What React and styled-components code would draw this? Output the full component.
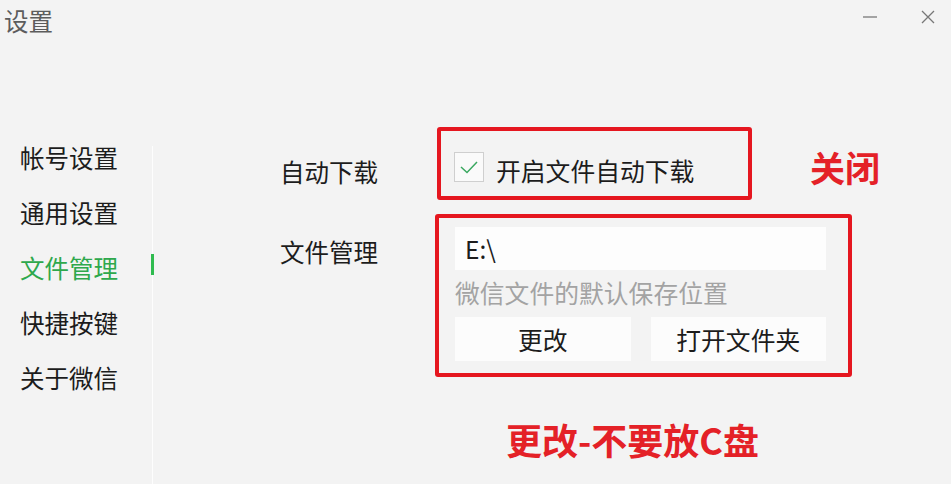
import styled, { createGlobalStyle } from "styled-components";

const GlobalStyle = createGlobalStyle`
    html, body {
        margin: 0;
        padding: 0;
        background: #f3f3f3;
    }
    body {
        font-family: "Noto Sans CJK SC", "Noto Sans", sans-serif;
        color: #1c1c1c;
    }
`

const Window = styled.div`
    width: 951px;
    height: 484px;
    display: flex;
    flex-direction: column;
    background: #f3f3f3;
    overflow: hidden;
`

const TitleBar = styled.div`
    height: 44px;
    display: flex;
    align-items: flex-start;
    justify-content: space-between;
`

const Title = styled.div`
    padding: 7px 0 0 4px;
    font-size: 24.5px;
    line-height: 28px;
    color: #5c5c5c;
`

const Controls = styled.div`
    display: flex;
    gap: 40px;
    padding: 8px 14px 0 0;
`

const ControlButton = styled.div`
    width: 18px;
    height: 18px;
    display: flex;
    align-items: center;
    justify-content: center;
    color: #777;
`

const Main = styled.div`
    flex: 1;
    display: flex;
`

const Sidebar = styled.nav`
    width: 152px;
    margin-top: 102px;
    border-right: 1px solid #fdfdfd;
    display: flex;
    flex-direction: column;
    gap: 31px;
`

const NavItem = styled.div`
    position: relative;
    padding-left: 20px;
    font-size: 24.5px;
    line-height: 24px;
    color: ${props => props.active ? "#2ea84c" : "#1c1c1c"};

    &::after {
        content: "";
        display: ${props => props.active ? "block" : "none"};
        position: absolute;
        right: -2px;
        top: -2px;
        width: 3px;
        height: 21px;
        background: #2fbb4f;
    }
`

const Content = styled.div`
    flex: 1;
    padding: 83px 0 0 127px;
    display: flex;
    flex-direction: column;
`

const Row = styled.div`
    display: flex;
    align-items: flex-start;
    margin-top: ${props => props.gap || 0}px;
`

const Label = styled.div`
    width: ${props => props.width}px;
    margin-top: ${props => props.offset}px;
    font-size: 24.5px;
    line-height: 24px;
`

const RedBox = styled.div`
    box-sizing: border-box;
    width: ${props => props.width}px;
    height: ${props => props.height}px;
    border: 4px solid #e5161f;
    border-radius: 3px;
`

const CheckRow = styled.label`
    display: flex;
    align-items: center;
    gap: 12px;
    padding: 21px 0 0 13px;
    font-size: 24.8px;
    line-height: 24px;
`

const CheckBox = styled.span`
    box-sizing: border-box;
    width: 30px;
    height: 30px;
    border: 1px solid #cfcfcf;
    background: #fafafa;
    display: flex;
    align-items: center;
    justify-content: center;
`

const CheckText = styled.span`
    margin-top: 6px;
`

const Note = styled.div`
    margin: 22px 0 0 58px;
    font-size: 35px;
    line-height: 36px;
    font-weight: 700;
    color: #e42127;
`

const PathPanel = styled.div`
    padding: 9px 22px 0 16px;
    display: flex;
    flex-direction: column;
`

const PathInput = styled.div`
    height: 43px;
    background: #fdfdfd;
    padding-left: 10px;
    display: flex;
    align-items: center;
    font-size: 24.5px;
`

const Hint = styled.div`
    margin-top: 9px;
    font-size: 24.8px;
    line-height: 26px;
    color: #a3a3a3;
`

const ButtonRow = styled.div`
    display: grid;
    grid-template-columns: 1fr 1fr;
    gap: 20px;
    margin-top: 12px;
`

const Button = styled.div`
    height: 44px;
    background: #fcfcfc;
    display: flex;
    align-items: center;
    justify-content: center;
    font-size: 24.8px;
`

const Caption = styled.div`
    margin: 44px 0 0 226px;
    font-size: 36px;
    line-height: 36px;
    font-weight: 700;
    color: #e42127;
    white-space: nowrap;
`

const navItems = ["帐号设置", "通用设置", "文件管理", "快捷按键", "关于微信"];

export default function App() {
    return (
        <Window>
            <GlobalStyle />
            <TitleBar>
                <Title>设置</Title>
                <Controls>
                    <ControlButton>
                        <svg width="16" height="16" viewBox="0 0 16 16">
                            <line x1="1" y1="8" x2="15" y2="8" stroke="#777" strokeWidth="1.3" />
                        </svg>
                    </ControlButton>
                    <ControlButton>
                        <svg width="16" height="16" viewBox="0 0 16 16">
                            <path d="M2 2 L14 14 M14 2 L2 14" stroke="#777" strokeWidth="1.3" />
                        </svg>
                    </ControlButton>
                </Controls>
            </TitleBar>
            <Main>
                <Sidebar>
                    {navItems.map((item) => (
                        <NavItem key={item} active={item === "文件管理"}>{item}</NavItem>
                    ))}
                </Sidebar>
                <Content>
                    <Row>
                        <Label width={157} offset={33}>自动下载</Label>
                        <RedBox width={315} height={73}>
                            <CheckRow>
                                <CheckBox>
                                    <svg width="22" height="16" viewBox="0 0 22 16">
                                        <path d="M3 8 L9 13.5 L19 3" fill="none" stroke="#3aa860" strokeWidth="1.5" />
                                    </svg>
                                </CheckBox>
                                <CheckText>开启文件自动下载</CheckText>
                            </CheckRow>
                        </RedBox>
                        <Note>关闭</Note>
                    </Row>
                    <Row gap={14}>
                        <Label width={155} offset={26}>文件管理</Label>
                        <RedBox width={417} height={163}>
                            <PathPanel>
                                <PathInput>E:\</PathInput>
                                <Hint>微信文件的默认保存位置</Hint>
                                <ButtonRow>
                                    <Button>更改</Button>
                                    <Button>打开文件夹</Button>
                                </ButtonRow>
                            </PathPanel>
                        </RedBox>
                    </Row>
                    <Caption>更改-不要放C盘</Caption>
                </Content>
            </Main>
        </Window>
    );
}
